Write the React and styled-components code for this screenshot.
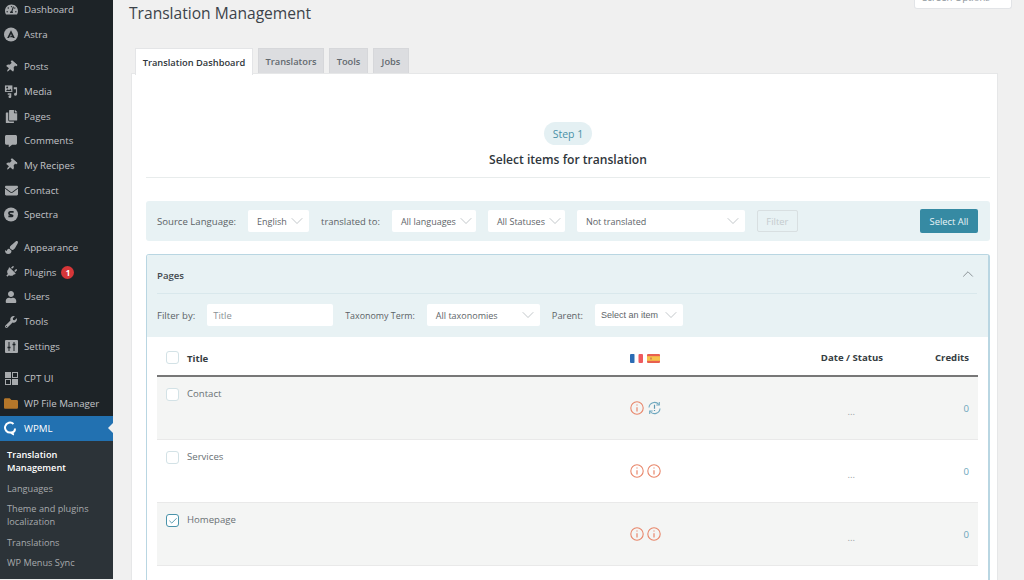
import React from 'react';
import styled, { createGlobalStyle } from 'styled-components';
import { ChevronDown, ChevronUp, Check } from 'lucide-react';
import {
  FaTachometerAlt, FaThumbtack, FaCopy, FaCommentAlt, FaEnvelope, FaPaintBrush,
  FaPlug, FaUser, FaWrench, FaFolder,
} from 'react-icons/fa';

const Global = createGlobalStyle`
  html, body { margin: 0; padding: 0; background: #f0f0f0; overflow: hidden; }
  * { box-sizing: border-box; }
  body { font-family: "Open Sans", "Noto Sans", sans-serif; color: #50575e; }
`;

const Page = styled.div`display: flex; width: 1024px; height: 580px; overflow: hidden;`;
const Sidebar = styled.nav`width: 113px; flex: none; height: 578px; background: #1d2327; color: #c3c4c7; font-size: 9.7px;`;
const Menu = styled.div`margin-top: ${p => p.$first ? '-3px' : '8px'};`;
const Item = styled.div`
  position: relative; display: flex; align-items: center; height: 24.7px; padding-left: 24px;
  background: ${p => p.$active ? '#2271b1' : 'transparent'};
  color: ${p => p.$active ? '#fff' : '#c3c4c7'};
  ${p => p.$active && `&::after { content: ''; position: absolute; right: 0; top: 7px; border: 5.5px solid transparent; border-right-color: #f0f0f0; }`}
`;
const IconSlot = styled.span`
  position: absolute; left: 4px; top: 0; bottom: 0; width: 14px; display: flex; align-items: center; justify-content: center;
  color: ${p => p.$color || '#a7aaad'};
  svg { display: block; }
`;
const Badge = styled.span`
  width: 13px; height: 13px; margin-left: 5px; border-radius: 50%; background: #d63638; color: #fff;
  font-size: 8px; font-weight: 700; display: flex; align-items: center; justify-content: center;
`;
const Sub = styled.div`background: #2c3338; padding-top: 3.5px; height: 138px;`;
const SubItem = styled.div`
  padding: 3.8px 7px; font-size: 9.2px; line-height: 13px;
  color: ${p => p.$current ? '#fff' : '#a7aaad'}; font-weight: ${p => p.$current ? 600 : 400};
`;

const Main = styled.main`flex: 1; min-width: 0; height: 580px; display: flex; flex-direction: column; padding: 0 12px 0 16px;`;
const Header = styled.header`height: 48px; flex: none; display: flex; justify-content: space-between; align-items: flex-start;`;
const Title = styled.h1`margin: 1px 0 0; font-size: 15.6px; line-height: 24px; font-weight: 400; color: #3c434a;`;
const ScreenOptions = styled.div`
  width: 98px; height: 23px; margin-top: -14px; background: #fff; border: 1px solid #e2e4e7; border-top: 0;
  border-radius: 0 0 3px 3px; font-size: 9.5px; color: #8c949a; display: flex; align-items: center; justify-content: center; gap: 6px;
`;
const Tabs = styled.div`display: flex; gap: 5px; margin-left: 6px; height: 25px; flex: none; position: relative; z-index: 1;`;
const Tab = styled.div`
  height: ${p => p.$active ? '27px' : '25px'}; display: flex; align-items: center;
  font-size: 9.3px; font-weight: 600; background: ${p => p.$active ? '#fff' : '#dcdde0'};
  color: ${p => p.$active ? '#2f363b' : '#62696f'}; border: 1px solid ${p => p.$active ? '#e4e5e7' : '#d6d7da'};
  border-bottom: 0; width: ${p => p.$w}px; justify-content: center; white-space: nowrap;
`;
const Card = styled.section`flex: 1; min-height: 0; margin: 0 14px 0 2px; background: #fff; border: 1px solid #e6e7e8; border-bottom: 0; padding: 48px 7px 0 14px; display: flex; flex-direction: column;`;
const StepBlock = styled.div`display: flex; flex-direction: column; align-items: center; border-bottom: 1px solid #e8ecec; height: 56px; flex: none;`;
const StepPill = styled.div`width: 48px; height: 23px; border-radius: 12px; background: #e4f0f3; color: #4a90a8; font-size: 10.5px; display: flex; align-items: center; justify-content: center;`;
const StepTitle = styled.h2`margin: 7px 0 0; font-size: 12.1px; line-height: 16px; font-weight: 600; color: #2f363b;`;
const FilterBar = styled.div`margin-top: 23px; height: 40px; flex: none; background: #e8f2f4; border-radius: 3px; display: flex; align-items: center; gap: 12px; padding: 0 12px 0 11px;`;
const Label = styled.span`font-size: ${p => p.$size || 9.6}px; color: #5b6266; white-space: nowrap;`;
const SelectBox = styled.div`
  width: ${p => p.$w}px; height: 22px; flex: none; background: #fff; border-radius: 2px; padding: 0 2px 0 ${p => p.$sans ? '6px' : '9px'};
  display: flex; align-items: center; justify-content: space-between; font-size: 9px; color: #5e6569; white-space: nowrap;
  font-family: ${p => p.$sans ? '"Liberation Sans", sans-serif' : 'inherit'};
  svg { color: #a3abaf; flex: none; }
`;
const TextInput = styled.div`width: 126px; height: 22px; flex: none; background: #fff; border-radius: 2px; padding-left: 6px; display: flex; align-items: center; font-size: 9.4px; color: #8a9296;`;
const FilterButton = styled.div`width: 41px; height: 22px; flex: none; border: 1px solid #d8dfe1; border-radius: 2px; color: #c4cbce; font-size: 9.4px; display: flex; align-items: center; justify-content: center;`;
const SelectAll = styled.div`margin-left: auto; width: 58px; height: 24px; flex: none; background: #368aa3; border-radius: 2px; color: #e9f4f7; font-size: 9.4px; display: flex; align-items: center; justify-content: center;`;

const Panel = styled.div`margin-top: 13px; flex: 1; min-height: 0; border: 1px solid #b9d6e2; border-width: 1px 2px 0 1px; border-radius: 3px 3px 0 0; display: flex; flex-direction: column; overflow: hidden;`;
const PanelHead = styled.div`background: #e8f2f4; padding: 0 11px 0 10px; flex: none;`;
const PanelTitle = styled.div`height: 39px; padding-top: 3px; display: flex; align-items: center; justify-content: space-between; border-bottom: 1px solid #d9e8ec; font-size: 9.6px; font-weight: 600; color: #42494e; svg { color: #6d7478; margin-top: -3px; }`;
const PanelFilters = styled.div`height: 43px; display: flex; align-items: center; gap: 12px; padding-bottom: 1px;`;
const Table = styled.div`padding: 0 10px 0 10px;`;
const Grid = styled.div`display: grid; grid-template-columns: 30px 443px 130px 123px 95px; align-items: start;`;
const HeadRow = styled(Grid)`height: 40px; padding-top: 4px; align-items: center; border-bottom: 2px solid #777; font-size: 9.6px; font-weight: 700; color: #363d42;`;
const Row = styled(Grid)`height: 63px; background: ${p => p.$alt ? '#f4f5f4' : '#fff'}; border-bottom: 1px solid #e9e9e9; font-size: 9.6px; color: #6a7175;`;
const CheckBox = styled.span`
  width: 13px; height: 13px; margin-left: 9px; margin-top: ${p => p.$top ?? -1}px; display: flex; align-items: center; justify-content: center; border-radius: 3px;
  background: #fff; border: 1px solid ${p => p.$on ? '#4a93aa' : '#d3e2e6'}; color: #3e8ba4;
`;
const RowTitle = styled.div`padding-top: 10px; line-height: 14px;`;
const LangIcons = styled.div`display: flex; gap: ${p => p.$gap}px; padding-top: ${p => p.$top || 0}px; align-items: center;`;
const DateCell = styled.div`text-align: right; padding: ${p => p.$body ? '28px 28px 0 0' : 0}; line-height: 14px; color: ${p => p.$body ? '#9a9fa2' : 'inherit'};`;
const CreditCell = styled.div`text-align: right; padding: ${p => p.$body ? '25px 9px 0 0' : '0 9px 0 0'}; line-height: 14px; color: ${p => p.$body ? '#6aa5bb' : 'inherit'};`;

const Pin = () => <FaThumbtack size={12} style={{ transform: 'rotate(40deg)' }} />;
const Astra = () => (
  <svg width="15" height="15" viewBox="0 0 16 16"><circle cx="8" cy="8" r="8" fill="#a7aaad" /><path d="M8 3.2 3.6 12h2.2L8 7.4l1 2.1H7.6l-.7 1.500h2.800l.5 1h2.200z" fill="#1d2327" /></svg>
);
const Spectra = () => (
  <svg width="15" height="15" viewBox="0 0 16 16"><circle cx="8" cy="8" r="8" fill="#a7aaad" /><path d="M11 5H7.200a1.500 1.500 0 0 0-.6 2.900l2.800 1.100a.6.6 0 0 1-.2 1.200H5" fill="none" stroke="#1d2327" strokeWidth="1.900" /></svg>
);
const MediaIcon = () => (
  <svg width="15" height="14" viewBox="0 0 15 14" fill="#a7aaad"><path d="M1 1h8v7H1z" /><circle cx="3.400" cy="3.200" r="1" fill="#1d2327" /><path d="M2 7l2-2 1.400 1.200L7 4.500 8 7z" fill="#1d2327" /><path d="M10.500 3H14v7.500a1.600 1.600 0 1 1-1.200-1.500V5h-2.300zM4 9.500h3.800V13a1.500 1.500 0 1 1-1.200-1.400V11H4z" /></svg>
);
const SettingsIcon = () => (
  <svg width="13" height="13" viewBox="0 0 13 13"><rect width="13" height="13" rx="1" fill="#a7aaad" /><path d="M4 2v9M9 2v9" stroke="#1d2327" /><path d="M2.500 7.500h3M7.500 4.500h3" stroke="#1d2327" strokeWidth="1.500" /></svg>
);
const CptIcon = () => (
  <svg width="13" height="13" viewBox="0 0 13 13" fill="none" stroke="#a7aaad"><rect x=".5" y=".5" width="5" height="5" fill="#a7aaad" /><rect x="7.500" y=".5" width="5" height="5" /><rect x=".5" y="7.500" width="5" height="5" /><rect x="7.500" y="7.500" width="5" height="5" fill="#a7aaad" /></svg>
);
const WpmlIcon = () => (
  <svg width="14" height="15" viewBox="0 0 14 15" fill="none" stroke="#fff" strokeWidth="2"><path d="M9.500 3A5 5 0 1 0 7 11.500c2.500 0 4-1.800 4-4" /><path d="M7 11.500c1 1.300 2 1.800 3 2" /></svg>
);
const Flag = ({ kind }) => kind === 'fr' ? (
  <svg width="13" height="9" viewBox="0 0 13 9"><rect width="5" height="9" rx="1" fill="#2b6cb5" /><rect x="4.500" width="4" height="9" fill="#fff" /><rect x="8.500" width="4.500" height="9" rx="1" fill="#ef5a5f" /></svg>
) : (
  <svg width="13" height="9" viewBox="0 0 13 9"><rect width="13" height="9" rx="1" fill="#e8604f" /><rect y="2.200" width="13" height="4.600" fill="#f6c24a" /><rect x="3" y="3.500" width="2" height="2" fill="#d98a4a" /></svg>
);
const InfoIcon = () => (
  <svg width="14" height="14" viewBox="0 0 14 14" fill="none" stroke="#e8866a"><circle cx="7" cy="7" r="6.200" strokeWidth="1.100" /><path d="M7 3.400v1.100M7 6.200v4.400" strokeWidth="1.200" /></svg>
);
const SyncIcon = () => (
  <svg width="15" height="14" viewBox="0 0 15 14" fill="none" stroke="#6fa8bf" strokeWidth="1.100"><path d="M2 6.500A5.500 5.500 0 0 1 11.800 3.500M13 7.500A5.500 5.500 0 0 1 3.200 10.500" /><path d="M12.300 1v3h-3M2.700 13v-3h3" /><path d="M7.500 3.800v4M7.500 9v1" strokeWidth="1.200" stroke="#5d98b0" /></svg>
);
const Chevron = () => <ChevronDown size={20} strokeWidth={0.8} />;

const groups = [
  [['Dashboard', <FaTachometerAlt size={13} />], ['Astra', <Astra />]],
  [['Posts', <Pin />], ['Media', <MediaIcon />], ['Pages', <FaCopy size={13} />], ['Comments', <FaCommentAlt size={12} />], ['My Recipes', <Pin />], ['Contact', <FaEnvelope size={13} />], ['Spectra', <Spectra />]],
  [['Appearance', <FaPaintBrush size={13} />], ['Plugins', <FaPlug size={12} style={{ transform: 'rotate(45deg)' }} />, 1], ['Users', <FaUser size={12} />], ['Tools', <FaWrench size={12} />], ['Settings', <SettingsIcon />]],
];
const rows = [
  { name: 'Contact', alt: true, sync: true },
  { name: 'Services' },
  { name: 'Homepage', alt: true, on: true },
];

export default function App() {
  return (
    <Page>
      <Global />
      <Sidebar>
        {groups.map((g, i) => (
          <Menu key={i} $first={i === 0}>
            {g.map(([label, icon, badge]) => (
              <Item key={label}>
                <IconSlot>{icon}</IconSlot>{label}{badge && <Badge>{badge}</Badge>}
              </Item>
            ))}
          </Menu>
        ))}
        <Menu>
          <Item><IconSlot><CptIcon /></IconSlot>CPT UI</Item>
          <Item><IconSlot $color="#b5772a"><FaFolder size={15} /></IconSlot>WP File Manager</Item>
          <Item $active><IconSlot><WpmlIcon /></IconSlot>WPML</Item>
        </Menu>
        <Sub>
          <SubItem $current>Translation Management</SubItem>
          <SubItem>Languages</SubItem>
          <SubItem>Theme and plugins localization</SubItem>
          <SubItem>Translations</SubItem>
          <SubItem>WP Menus Sync</SubItem>
        </Sub>
      </Sidebar>
      <Main>
        <Header>
          <Title>Translation Management</Title>
          <ScreenOptions>Screen Options <ChevronDown size={8} /></ScreenOptions>
        </Header>
        <Tabs>
          <Tab $active $w={118}>Translation Dashboard</Tab>
          <Tab $w={66}>Translators</Tab>
          <Tab $w={39}>Tools</Tab>
          <Tab $w={36}>Jobs</Tab>
        </Tabs>
        <Card>
          <StepBlock>
            <StepPill>Step 1</StepPill>
            <StepTitle>Select items for translation</StepTitle>
          </StepBlock>
          <FilterBar>
            <Label>Source Language:</Label>
            <SelectBox $w={61}>English <Chevron /></SelectBox>
            <Label $size={9.45}>translated to:</Label>
            <SelectBox $w={84}>All languages <Chevron /></SelectBox>
            <SelectBox $w={77}>All Statuses <Chevron /></SelectBox>
            <SelectBox $w={168}>Not translated <Chevron /></SelectBox>
            <FilterButton>Filter</FilterButton>
            <SelectAll>Select All</SelectAll>
          </FilterBar>
          <Panel>
            <PanelHead>
              <PanelTitle>Pages <ChevronUp size={18} strokeWidth={1} /></PanelTitle>
              <PanelFilters>
                <Label>Filter by:</Label>
                <TextInput>Title</TextInput>
                <Label $size={8.9}>Taxonomy Term:</Label>
                <SelectBox $w={113}>All taxonomies <Chevron /></SelectBox>
                <Label $size={9.3}>Parent:</Label>
                <SelectBox $w={88} $sans>Select an item <Chevron /></SelectBox>
              </PanelFilters>
            </PanelHead>
            <Table>
              <HeadRow>
                <CheckBox />
                <div>Title</div>
                <LangIcons $gap={4}><Flag kind="fr" /><Flag kind="es" /></LangIcons>
                <DateCell>Date / Status</DateCell>
                <CreditCell>Credits</CreditCell>
              </HeadRow>
              {rows.map(r => (
                <Row key={r.name} $alt={r.alt}>
                  <CheckBox $top={11} $on={r.on}>{r.on && <Check size={10} strokeWidth={2} />}</CheckBox>
                  <RowTitle>{r.name}</RowTitle>
                  <LangIcons $gap={3} $top={24}><InfoIcon />{r.sync ? <SyncIcon /> : <InfoIcon />}</LangIcons>
                  <DateCell $body>...</DateCell>
                  <CreditCell $body>0</CreditCell>
                </Row>
              ))}
            </Table>
          </Panel>
        </Card>
      </Main>
    </Page>
  );
}
